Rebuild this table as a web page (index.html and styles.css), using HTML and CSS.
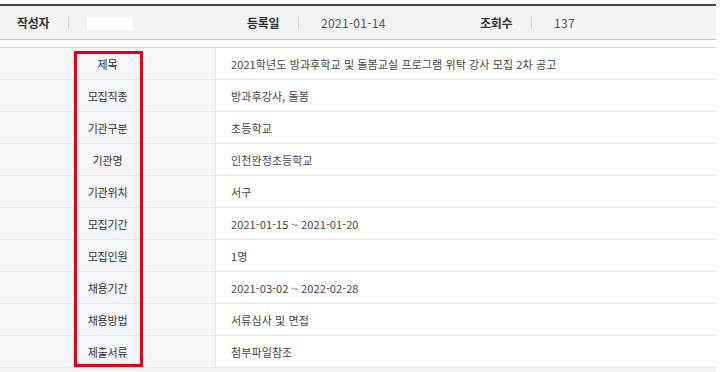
FILE: index.html
```html
<!DOCTYPE html>
<html lang="ko">
<head>
<meta charset="utf-8">
<title>채용공고</title>
<link rel="stylesheet" href="styles.css">
</head>
<body>
<div class="board">
  <div class="meta">
    <div class="meta-group g1">
      <span class="meta-label">작성자</span>
      <span class="meta-sep"></span>
      <span class="meta-value"><span class="redact"></span></span>
    </div>
    <div class="meta-group g2">
      <span class="meta-label">등록일</span>
      <span class="meta-sep"></span>
      <span class="meta-value">2021-01-14</span>
    </div>
    <div class="meta-group g3">
      <span class="meta-label">조회수</span>
      <span class="meta-sep"></span>
      <span class="meta-value">137</span>
    </div>
  </div>
  <div class="table">
    <div class="row"><div class="th">제목</div><div class="td">2021학년도 방과후학교 및 돌봄교실 프로그램 위탁 강사 모집 2차 공고</div></div>
    <div class="row"><div class="th">모집직종</div><div class="td">방과후강사, 돌봄</div></div>
    <div class="row"><div class="th">기관구분</div><div class="td">초등학교</div></div>
    <div class="row"><div class="th">기관명</div><div class="td">인천완정초등학교</div></div>
    <div class="row"><div class="th">기관위치</div><div class="td">서구</div></div>
    <div class="row"><div class="th">모집기간</div><div class="td">2021-01-15 ~ 2021-01-20</div></div>
    <div class="row"><div class="th">모집인원</div><div class="td">1명</div></div>
    <div class="row"><div class="th">채용기간</div><div class="td">2021-03-02 ~ 2022-02-28</div></div>
    <div class="row"><div class="th">채용방법</div><div class="td">서류심사 및 면접</div></div>
    <div class="row"><div class="th">제출서류</div><div class="td">첨부파일참조</div></div>
    <div class="highlight"></div>
  </div>
  <div class="foot"></div>
</div>
</body>
</html>
```
FILE: styles.css
```css
html, body {
  margin: 0;
  padding: 0;
  background: #ffffff;
}
body {
  font-family: "Noto Sans CJK KR", "Noto Sans", sans-serif;
  color: #333;
}
.board {
  width: 716px;
  padding-top: 4px;
}
.meta {
  display: flex;
  align-items: center;
  height: 33px;
  background: #f2f3f5;
  border-top: 2px solid #444;
  border-bottom: 1px solid #c4c4c4;
  padding-left: 17px;
  box-sizing: content-box;
}
.meta-group {
  display: flex;
  align-items: center;
}
.g1 { width: 230px; }
.g2 { width: 233px; }
.meta-label {
  font-size: 12px;
  font-weight: 700;
  color: #333;
  letter-spacing: -0.3px;
  line-height: 16px;
  width: 51px;
}
.meta-sep {
  width: 1px;
  height: 13px;
  background: #d8d8d8;
  margin-right: 22px;
}
.g1 .meta-sep { margin-right: 18px; }
.meta-value {
  font-size: 12px;
  color: #555;
  line-height: 16px;
  letter-spacing: 0.3px;
}
.redact {
  display: block;
  width: 46px;
  height: 13px;
  background: #ffffff;
  margin-top: 2px;
}
.table {
  position: relative;
  margin-top: 7px;
  border-top: 1px solid #d4d4d4;
}
.row {
  display: grid;
  grid-template-columns: 216px 1fr;
  height: 31px;
  border-bottom: 1px solid #e6e6e6;
}
.th {
  background: #f4f5f7;
  border-right: 1px solid #e6e6e6;
  display: flex;
  align-items: center;
  justify-content: center;
  font-size: 11px;
  color: #333;
  letter-spacing: -0.2px;
}
.td {
  display: flex;
  align-items: center;
  padding-left: 15px;
  font-size: 11px;
  color: #444;
  letter-spacing: 0.1px;
}
.highlight {
  position: absolute;
  left: 74px;
  top: 3px;
  width: 63px;
  height: 310px;
  border: 3px solid #e60012;
}
.foot {
  height: 6px;
  background: #f2f3f5;
}
```
